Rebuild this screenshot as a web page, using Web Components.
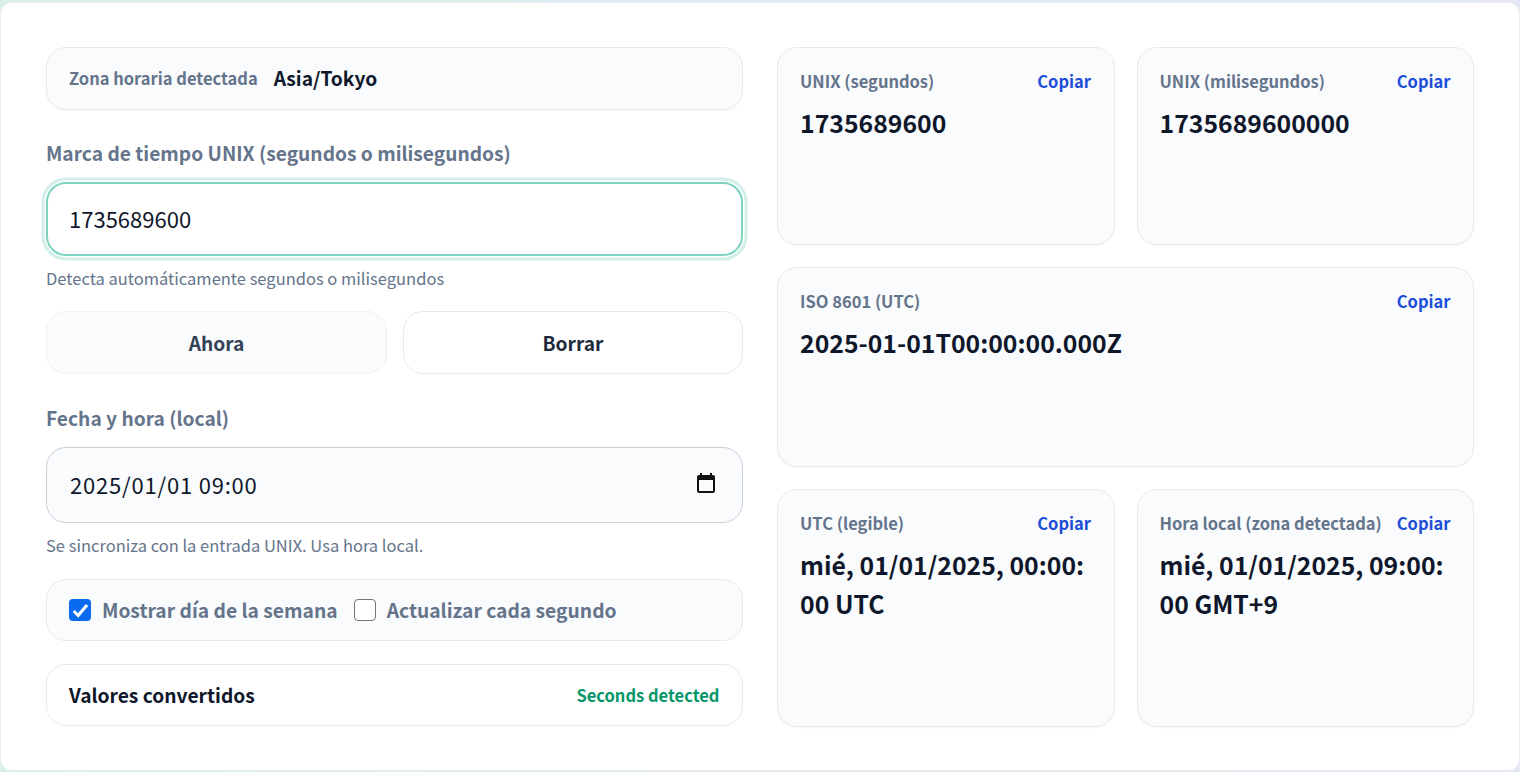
<!DOCTYPE html>
<html lang="es">
<head>
<meta charset="utf-8">
<title>Conversor UNIX</title>
<style>
  html, body { margin: 0; height: 100%; }
  body {
    width: 1520px; height: 772px; overflow: hidden;
    background: linear-gradient(90deg, #d8efe9, #e2e6f5);
    font-family: "Noto Sans CJK JP", "Noto Sans", sans-serif;
  }
</style>
</head>
<body>
<converter-panel>
  <div slot="left">
    <tz-bar label="Zona horaria detectada" value="Asia/Tokyo"></tz-bar>
    <field-block label="Marca de tiempo UNIX (segundos o milisegundos)" hint="Detecta automáticamente segundos o milisegundos">
      <text-box value="1735689600" focused></text-box>
    </field-block>
    <action-row></action-row>
    <field-block label="Fecha y hora (local)" hint="Se sincroniza con la entrada UNIX. Usa hora local.">
      <text-box value="2025/01/01 09:00" date></text-box>
    </field-block>
    <option-row></option-row>
    <status-row title="Valores convertidos" status="Seconds detected"></status-row>
  </div>
  <result-card slot="right" label="UNIX (segundos)" value="1735689600"></result-card>
  <result-card slot="right" label="UNIX (milisegundos)" value="1735689600000"></result-card>
  <result-card slot="right" wide label="ISO 8601 (UTC)" value="2025-01-01T00:00:00.000Z"></result-card>
  <result-card slot="right" label="UTC (legible)" value="mié, 01/01/2025, 00:00:00 UTC"></result-card>
  <result-card slot="right" label="Hora local (zona detectada)" value="mié, 01/01/2025, 09:00:00 GMT+9"></result-card>
</converter-panel>

<script>
// every element keeps its own styles, shared font comes through inheritance
function define(name, css, render) {
  customElements.define(name, class extends HTMLElement {
    connectedCallback() {
      if (this.shadowRoot) return;
      this.attachShadow({ mode: 'open' });
      this.shadowRoot.innerHTML = '<style>' + css + '</style>' + render(this);
    }
  });
}

define('converter-panel', `
  :host {
    display: grid; grid-template-columns: 697px 697px; column-gap: 34px;
    box-sizing: border-box; width: 1520px; height: 769px; margin-top: 2px;
    padding: 44px 45px;
    background: #fff; border: 1px solid rgba(226,232,240,.7); border-radius: 12px;
  }
  .left { display: block; }
  .right {
    display: grid; grid-template-columns: 337.500px 337.500px; column-gap: 22px;
    grid-template-rows: 197.500px 199.500px 237.500px; row-gap: 22.500px;
  }
  ::slotted([slot=left]) { display: flex; flex-direction: column; }
`, () => `<slot name="left" class="left"></slot><div class="right"><slot name="right" style="display:contents"></slot></div>`);

define('tz-bar', `
  :host {
    display: flex; align-items: center; gap: 16px; box-sizing: border-box; height: 62.500px;
    padding: 0 22.500px 0 22px; background: #f9fbfd; border: 1px solid #e7eaef; border-radius: 20px;
    box-shadow: 0 1px 2px rgba(15,23,42,.03);
  }
  .l { font-size: 16.500px; font-weight: 600; color: #64748b; }
  .v { font-size: 19.200px; font-weight: 600; color: #0f172a; }
`, el => `<span class="l">${el.getAttribute('label')}</span><span class="v">${el.getAttribute('value')}</span>`);

define('field-block', `
  :host { display: block; margin-top: 26.500px; }
  label { display: block; font-size: 19.200px; font-weight: 600; color: #64748b; line-height: 34px; margin-bottom: 12px; }
  p { margin: 11px 0 0; font-size: 16.500px; line-height: 22px; color: #64748b; }
`, el => `<label>${el.getAttribute('label')}</label><slot></slot><p>${el.getAttribute('hint')}</p>`);

define('text-box', `
  :host {
    display: flex; align-items: center; justify-content: space-between; box-sizing: border-box;
    height: 74px; padding: 0 23px 3px 22px; font-size: 22px; color: #0f172a;
    background: #fff; border: 1px solid #c9cfdb; border-radius: 20px;
  }
  :host([focused]) { border: 2px solid #7fd3c1; padding: 0 22px 3px 21px; box-shadow: 0 0 0 1.500px #fff, 0 0 0 4.500px #d3efe9; }
  :host([date]) { height: 76px; background: #f9fbfd; letter-spacing: .8px; padding: 0 23px 2px; }
  svg { width: 24px; height: 24px; display: block; margin-right: 1px; }
`, el => `<span>${el.getAttribute('value')}</span>` + (el.hasAttribute('date')
  ? `<svg viewBox="0 0 24 24"><path fill="#111" d="M19 3h-1V1h-2v2H8V1H6v2H5c-1.100 0-2 .9-2 2v14c0 1.100.9 2 2 2h14c1.100 0 2-.9 2-2V5c0-1.100-.9-2-2-2zm0 16H5V8h14v11z"/></svg>` : ''));

define('action-row', `
  :host { display: grid; grid-template-columns: 341px 340px; column-gap: 16px; margin: 22px 0 .5px; }
  button {
    height: 63px; font: inherit; font-size: 19.200px; font-weight: 600; color: #1e293b;
    border: 1px solid #e7eaef; border-radius: 20px; background: #fff;
  }
  button.soft { background: #f9fbfd; border-color: #eef1f5; color: #334155; }
`, () => `<button class="soft">Ahora</button><button>Borrar</button>`);

define('option-row', `
  :host {
    display: flex; align-items: center; gap: 16px; box-sizing: border-box; height: 62.500px; margin-top: 22.500px;
    padding: 0 22.500px 0 22px; background: #f9fbfd; border: 1px solid #e7eaef; border-radius: 20px;
    font-size: 19.250px; font-weight: 600; color: #64748b;
  }
  label { display: flex; align-items: center; gap: 11px; }
  .box { width: 22px; height: 22px; box-sizing: border-box; border-radius: 4px; border: 1.500px solid #767676; background: #fff; }
  .box.on { background: #0b6bf0; border: 0; }
  svg { display: block; width: 22px; height: 22px; }
`, () => `<label><span class="box on"><svg viewBox="0 0 22 22"><path d="M4.700 12l4.500 4.500L18 6" fill="none" stroke="#fff" stroke-width="3"/></svg></span>Mostrar día de la semana</label>
  <label><span class="box"></span>Actualizar cada segundo</label>`);

define('status-row', `
  :host {
    display: flex; align-items: center; justify-content: space-between; box-sizing: border-box; height: 62.500px; margin-top: 22.500px;
    padding: 0 22.500px 0 22px; background: #fff; border: 1px solid #e7eaef; border-radius: 20px;
  }
  .t { font-size: 19.200px; font-weight: 600; color: #0f172a; }
  .s { font-size: 16.500px; font-weight: 600; color: #059669; }
`, el => `<span class="t">${el.getAttribute('title')}</span><span class="s">${el.getAttribute('status')}</span>`);

define('result-card', `
  :host {
    display: block; box-sizing: border-box; padding: 20px 22.500px 19px 22px; min-width: 0;
    background: #f9fbfd; border: 1px solid #e7eaef; border-radius: 20px;
    box-shadow: 0 1px 2px rgba(15,23,42,.03);
  }
  :host([wide]) { grid-column: 1 / -1; }
  .head { display: flex; justify-content: space-between; align-items: center; gap: 12px; height: 26px; }
  .l { font-size: 16.500px; font-weight: 600; color: #64748b; white-space: nowrap; }
  .c { font-size: 16.500px; font-weight: 600; color: #1d4ed8; }
  .v { margin-top: 9px; font-size: 24.800px; line-height: 39px; font-weight: 600; color: #0f172a; word-break: break-all; }
`, el => `<div class="head"><span class="l">${el.getAttribute('label')}</span><span class="c">Copiar</span></div><div class="v">${el.getAttribute('value')}</div>`);
</script>
</body>
</html>
